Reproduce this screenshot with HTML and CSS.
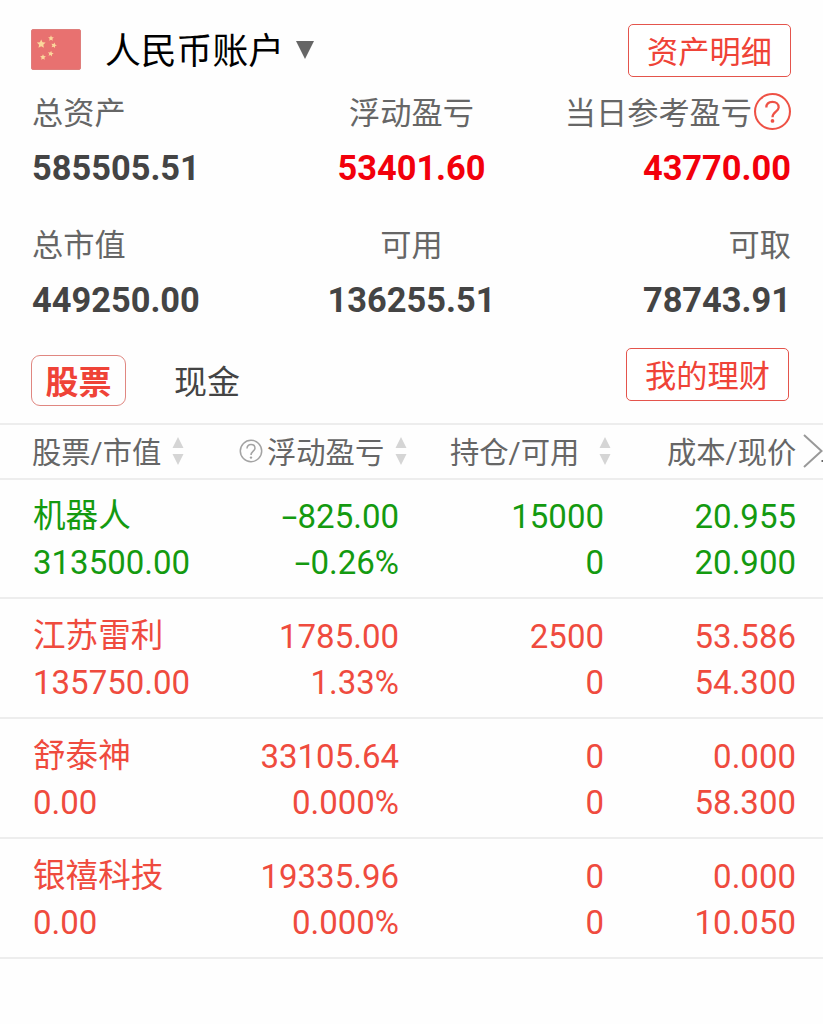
FILE: index.html
```
<!DOCTYPE html>
<html lang="zh-CN">
<head>
<meta charset="utf-8">
<title>人民币账户</title>
<link rel="stylesheet" href="styles.css">
</head>
<body>
<header class="account">
  <svg class="flag" viewBox="0 0 50 41">
    <defs><path id="star" d="M0-1 .28-.38.95-.31.46.15.59.81 0 .48-.59.81-.46.15-.95-.31-.28-.38Z"/></defs>
    <rect x=".5" y=".5" width="49" height="40" rx="1.5" fill="#e87170" stroke="#df7e7c"/>
    <g fill="#fbd79c">
      <use href="#star" transform="translate(10.2 15) scale(4.6)"/>
      <use href="#star" transform="translate(20 9.3) scale(3)"/>
      <use href="#star" transform="translate(22.9 16.3) rotate(15) scale(3)"/>
      <use href="#star" transform="translate(19.7 24.7) rotate(10) scale(3)"/>
      <use href="#star" transform="translate(12 28.2) scale(3)"/>
    </g>
  </svg>
  <h1 class="account-name">人民币账户</h1>
  <svg class="caret" viewBox="0 0 18 18"><path d="M0 0H18L9 18Z" fill="#666"/></svg>
  <button class="outline-btn">资产明细</button>
</header>

<section class="summary">
  <div class="stat"><span class="label">总资产</span><b class="value">585505.51</b></div>
  <div class="stat center"><span class="label">浮动盈亏</span><b class="value hot">53401.60</b></div>
  <div class="stat right"><span class="label">当日参考盈亏<svg class="help" viewBox="0 0 36 36" fill="none" stroke="#ee5145" stroke-width="2"><circle cx="18" cy="18" r="17"/><path d="M12 14.2C12 10.5 14.5 8.6 18 8.6S24 10.8 24 14C24 18 18 18.4 18 23.5" stroke-width="2.2"/><circle cx="18" cy="27.2" r="1.8" fill="#ee5145" stroke="none"/></svg></span><b class="value hot">43770.00</b></div>
  <div class="stat"><span class="label">总市值</span><b class="value">449250.00</b></div>
  <div class="stat center"><span class="label">可用</span><b class="value">136255.51</b></div>
  <div class="stat right"><span class="label">可取</span><b class="value">78743.91</b></div>
</section>

<nav class="tabs">
  <span class="tab active">股票</span>
  <span class="tab">现金</span>
  <button class="outline-btn">我的理财</button>
</nav>

<div class="thead">
  <div class="th"><span>股票/市值</span><svg class="sort" viewBox="0 0 12 28"><path d="M6 0 11.5 11H.5ZM6 28 11.5 17H.5Z"/></svg></div>
  <div class="th"><svg class="help-sm" viewBox="0 0 24 24" fill="none" stroke="#a3a3a3" stroke-width="1.5"><circle cx="12" cy="12" r="10.7"/><path d="M8 9.5C8 7 9.6 5.6 12 5.6S16 7 16 9.3C16 12 12 12.5 12 16"/><circle cx="12" cy="18.6" r="1.2" fill="#a3a3a3" stroke="none"/></svg><span>浮动盈亏</span><svg class="sort" viewBox="0 0 12 28"><path d="M6 0 11.5 11H.5ZM6 28 11.5 17H.5Z"/></svg></div>
  <div class="th"><span>持仓/可用</span><svg class="sort wide" viewBox="0 0 12 28"><path d="M6 0 11.5 11H.5ZM6 28 11.5 17H.5Z"/></svg></div>
  <div class="th"><span>成本/现价</span><svg class="more" viewBox="0 0 20 34" fill="none" stroke="#999" stroke-width="2"><path d="M1 1 18.5 17 1 33"/><path d="M18.5 27h1.5" stroke="#666"/></svg></div>
</div>

<main>
  <div class="row down">
    <div class="cell name"><span>机器人</span><span>313500.00</span></div>
    <div class="cell"><span><i class="minus">-</i>825.00</span><span><i class="minus">-</i>0.26%</span></div>
    <div class="cell"><span>15000</span><span>0</span></div>
    <div class="cell"><span>20.955</span><span>20.900</span></div>
  </div>
  <div class="row">
    <div class="cell name"><span>江苏雷利</span><span>135750.00</span></div>
    <div class="cell"><span>1785.00</span><span>1.33%</span></div>
    <div class="cell"><span>2500</span><span>0</span></div>
    <div class="cell"><span>53.586</span><span>54.300</span></div>
  </div>
  <div class="row">
    <div class="cell name"><span>舒泰神</span><span>0.00</span></div>
    <div class="cell"><span>33105.64</span><span>0.000%</span></div>
    <div class="cell"><span>0</span><span>0</span></div>
    <div class="cell"><span>0.000</span><span>58.300</span></div>
  </div>
  <div class="row">
    <div class="cell name"><span>银禧科技</span><span>0.00</span></div>
    <div class="cell"><span>19335.96</span><span>0.000%</span></div>
    <div class="cell"><span>0</span><span>0</span></div>
    <div class="cell"><span>0.000</span><span>10.050</span></div>
  </div>
</main>
</body>
</html>
```
FILE: styles.css
```
* { box-sizing: border-box; }
body {
  margin: 0;
  width: 823px;
  height: 1024px;
  overflow: hidden;
  background: #fefefe;
  color: #666;
  font-family: Roboto, "Noto Sans CJK SC", sans-serif;
}
svg { display: block; flex: none; }
.account {
  display: flex;
  align-items: center;
  height: 86px;
  padding: 12px 32px 0 31px;
}
.flag { width: 50px; height: 41px; }
.account-name {
  margin: 0 0 0 24px;
  padding-top: 6px;
  width: 178px;
  font-size: 35.8px;
  line-height: 40px;
  font-weight: 400;
  color: #000;
  white-space: nowrap;
}
.caret { width: 18px; height: 18px; margin: 2px 0 0 13px; }
.outline-btn {
  width: 163px;
  height: 53px;
  margin-left: auto;
  padding: 4px 0 0;
  border: 1.5px solid #e4544c;
  border-radius: 5px;
  background: #fff;
  color: #ef4337;
  font: 400 31.2px/47px Roboto, "Noto Sans CJK SC", sans-serif;
}
.account .outline-btn { margin-top: 2px; }
.summary {
  display: grid;
  grid-template-columns: 1fr 1fr 1fr;
  grid-auto-rows: 132px;
  padding: 0 32px;
}
.stat { display: flex; flex-direction: column; align-items: flex-start; }
.stat.center { align-items: center; }
.stat.right { align-items: flex-end; }
.label {
  display: flex;
  align-items: center;
  height: 48px;
  font-size: 31.2px;
  white-space: nowrap;
}
.help { width: 37px; height: 37px; margin: 2px 0 0 2px; }
.value {
  height: 64px;
  line-height: 68px;
  font-size: 34.4px;
  font-weight: 700;
  color: #444;
}
.value.hot { color: #f2000b; }
.tabs {
  display: flex;
  align-items: flex-start;
  height: 73px;
  padding: 3px 34px 0 31px;
}
.tabs .outline-btn { margin-top: -5px; }
.tab {
  height: 51px;
  margin: 2px 0 0 48px;
  padding-top: 3px;
  font-size: 33px;
  line-height: 50px;
  color: #444;
}
.tab.active {
  width: 95px;
  margin-left: 0;
  border: 1px solid #e08781;
  border-radius: 9px;
  line-height: 48px;
  text-align: center;
  font-weight: 700;
  color: #ef4337;
}
.thead {
  display: grid;
  grid-template-columns: 207px 211px 217px 156px;
  height: 57px;
  padding-left: 32px;
  border-top: 2px solid #ededed;
  border-bottom: 2px solid #ededed;
}
.th { display: flex; align-items: center; font-size: 29.3px; white-space: nowrap; }
.th span { padding-bottom: 4px; }
.sort { width: 12px; height: 28px; margin: 0 0 2px 11px; fill: #d5d5d5; }
.sort.wide { margin-left: 20px; }
.help-sm { width: 24px; height: 24px; margin: 0 4px 2px 0; }
.more { width: 20px; height: 34px; margin: 0 0 2px 7px; }
.row {
  display: grid;
  grid-template-columns: 200px 167px 205px 192px;
  height: 120px;
  padding: 15px 0 0 33px;
  border-bottom: 2px solid #ededed;
  color: #ef4b3e;
}
.row.down { color: #149a10; height: 119px; padding-top: 14px; }
.cell {
  display: flex;
  flex-direction: column;
  align-items: flex-end;
  margin-right: 1px;
  font-size: 33px;
  line-height: 46px;
  white-space: nowrap;
}
.cell.name { align-items: flex-start; }
.cell.name span:first-child { font-size: 32.6px; line-height: 44px; margin-bottom: 2px; }
.minus {
  display: inline-block;
  margin-right: 3px;
  font-style: normal;
  transform: scaleX(1.7);
}
```
